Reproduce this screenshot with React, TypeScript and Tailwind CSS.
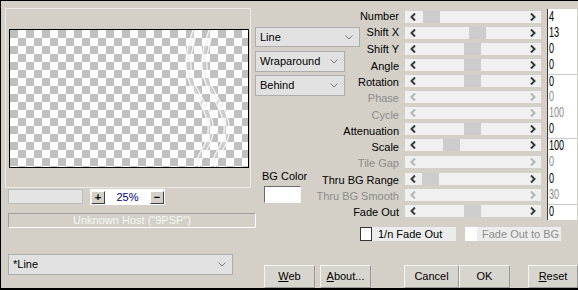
import React from 'react';

type Param = { label: string; value: string; thumb?: string; disabled?: boolean };

const params: Param[] = [
  { label: 'Number', value: '4', thumb: 'left-[18px]' },
  { label: 'Shift X', value: '13', thumb: 'left-[64px]' },
  { label: 'Shift Y', value: '0', thumb: 'left-[59px]' },
  { label: 'Angle', value: '0', thumb: 'left-[59px]' },
  { label: 'Rotation', value: '0', thumb: 'left-[59px]' },
  { label: 'Phase', value: '0', disabled: true },
  { label: 'Cycle', value: '100', disabled: true },
  { label: 'Attenuation', value: '0', thumb: 'left-[59px]' },
  { label: 'Scale', value: '100', thumb: 'left-[38px]' },
  { label: 'Tile Gap', value: '0', disabled: true },
  { label: 'Thru BG Range', value: '0', thumb: 'left-[17px]' },
  { label: 'Thru BG Smooth', value: '30', disabled: true },
  { label: 'Fade Out', value: '0', thumb: 'left-[59px]' },
];

const barRowH = ['h-[16px]', 'h-[16px]', 'h-[16px]', 'h-[16px]', 'h-[16px]', 'h-[16px]', 'h-[16px]', 'h-[16px]', 'h-[17px]', 'h-[17px]', 'h-[16px]', 'h-[16px]', 'h-[16px]'];
const labelRowH = ['h-[16px]', 'h-[17px]', 'h-[17px]', 'h-[16px]', 'h-[16px]', 'h-[17px]', 'h-[16px]', 'h-[16px]', 'h-[16px]', 'h-[17px]', 'h-[16px]', 'h-[16px]', 'h-[16px]'];

function Chevron() {
  return (
    <svg width="8" height="5" viewBox="0 0 8 5">
      <polyline points="0.5,0.5 4,4 7.5,0.5" fill="none" stroke="#7a7a7a" strokeWidth="1" />
    </svg>
  );
}

function Dropdown({ label, className }: { label: string; className: string }) {
  return (
    <div className={`flex items-center justify-between bg-[#e1e1e1] border border-[#adadad] pl-[4px] pr-[6px] text-black ${className}`}>
      <span>{label}</span>
      <Chevron />
    </div>
  );
}

function Arrow({ dir, disabled }: { dir: 'l' | 'r'; disabled?: boolean }) {
  const c = disabled ? '#b4b4b4' : '#3a3a3a';
  return (
    <svg width="6" height="8" viewBox="0 0 6 8">
      {dir === 'l' ? (
        <polyline points="5,0.5 1.5,4 5,7.5" fill="none" stroke={c} strokeWidth="2" />
      ) : (
        <polyline points="1,0.5 4.5,4 1,7.5" fill="none" stroke={c} strokeWidth="2" />
      )}
    </svg>
  );
}

function Button({ children, className }: { children: React.ReactNode; className: string }) {
  return (
    <div className={`h-[23px] flex items-center justify-center border border-t-[#f4f4f4] border-l-[#f4f4f4] border-r-[#9a9a9a] border-b-[#9a9a9a] bg-[#d8d5cf] text-black ${className}`}>
      {children}
    </div>
  );
}

const wave = 'M183 0 C174 25, 172 42, 185 64 C198 86, 204 102, 191 121 C187 128, 185 133, 184 137';

export default function App() {
  return (
    <div className="w-[578px] h-[290px] box-border border-t border-l border-b-2 border-black bg-[#d4d0c8] flex overflow-hidden font-['Liberation_Sans',Arial,sans-serif] text-[11px] leading-[13px] text-black">
      {/* Left column */}
      <div className="w-[254px] shrink-0 flex flex-col">
        <div className="mt-[7px] ml-[4px] w-[246px] h-[180px] box-border border border-[#ecebe8]">
          <div className="relative ml-[3px] mt-[20px] w-[240px] h-[139px] box-border border border-black bg-[conic-gradient(#fff_0_25%,#c0c0c0_0_50%,#fff_0_75%,#c0c0c0_0)] bg-[length:16px_16px]">
            <svg className="absolute inset-0" width="238" height="137" viewBox="0 0 238 137">
              <g fill="none" stroke="#e8e8e8" strokeWidth="3" opacity="0.35">
                <path d={wave} transform="translate(2,0)" />
                <path d={wave} transform="translate(18,0)" />
              </g>
              <g fill="none" stroke="#ffffff" strokeWidth="1.2" opacity="0.95">
                <path d={wave} />
                <path d={wave} transform="translate(5,0)" />
                <path d={wave} transform="translate(16,0)" />
                <path d={wave} transform="translate(21,0)" />
              </g>
            </svg>
          </div>
        </div>
        <div className="mt-[1px] flex items-start">
          <div className="ml-[7px] w-[75px] h-[15px] box-border border border-[#bdbdbd] bg-[#e4e4e4]" />
          <div className="ml-[7px] w-[75px] h-[16px] bg-white flex items-center justify-between px-[1px]">
            <div className="w-[14px] h-[13px] box-border border border-t-white border-l-white border-r-[#404040] border-b-[#404040] bg-[#d4d0c8] flex items-center justify-center font-bold text-[11px] leading-none">+</div>
            <span className="text-[#000080]">25%</span>
            <div className="w-[14px] h-[13px] box-border border border-t-white border-l-white border-r-[#404040] border-b-[#404040] bg-[#d4d0c8] flex items-center justify-center font-bold text-[11px] leading-none">−</div>
          </div>
        </div>
        <div className="mt-[8px] ml-[7px] w-[248px] h-[15px] shrink-0 box-border border border-t-[#a0a0a0] border-l-[#a0a0a0] border-r-white border-b-white flex items-center justify-center text-[#f6f6f6]">
          Unknown Host ("9PSP")
        </div>
        <Dropdown label="*Line" className="mt-[26px] ml-[7px] w-[225px] h-[21px] box-border" />
      </div>

      {/* Right part */}
      <div className="w-[323px] shrink-0 flex flex-col">
        <div className="h-[221px] flex">
          {/* middle column */}
          <div className="w-[105px] shrink-0 flex flex-col">
            <Dropdown label="Line" className="mt-[26px] w-[105px] h-[20px] box-border" />
            <Dropdown label="Wraparound" className="mt-[4px] w-[90px] h-[21px] box-border" />
            <Dropdown label="Behind" className="mt-[3px] w-[90px] h-[21px] box-border" />
            <div className="mt-[74px] ml-[7px] h-[13px]">BG Color</div>
            <div className="mt-[3px] ml-[9px] w-[37px] h-[17px] box-border border border-t-[#6a6a6a] border-l-[#6a6a6a] border-r-[#f4f4f4] border-b-[#f4f4f4] bg-white" />
          </div>
          {/* labels */}
          <div className="w-[39px] shrink-0 flex flex-col mt-[9px]">
            {params.map((p, i) => (
              <div key={p.label} className={`${labelRowH[i]} flex justify-end whitespace-nowrap ${p.disabled ? 'text-[#8c8c8c]' : 'text-black'}`}>
                {p.label}
              </div>
            ))}
          </div>
          {/* scrollbars */}
          <div className="ml-[6px] w-[136px] shrink-0 flex flex-col mt-[9px]">
            {params.map((p, i) => (
              <div key={p.label} className={`${barRowH[i]} pt-[1px] box-border`}>
                <div className="relative h-[12px] bg-[#f0f0f0] flex items-center justify-between px-[5px]">
                  {p.thumb && <div className={`absolute top-0 h-[12px] w-[17px] bg-[#cdcdcd] ${p.thumb}`} />}
                  <Arrow dir="l" disabled={p.disabled} />
                  <Arrow dir="r" disabled={p.disabled} />
                </div>
              </div>
            ))}
          </div>
          {/* edits */}
          <div className="ml-[6px] w-[30px] shrink-0 mt-[8px] self-start box-border border-l border-[#3c3c3c] bg-white pt-[1px]">
            {params.map((p, i) => (
              <div
                key={p.label}
                className={`${barRowH[i]} box-border pl-[1px] ${i === 4 || i === 8 || i === 12 ? 'border-t border-[#c8c8c8]' : ''} ${p.disabled ? 'text-[#8c8c8c]' : 'text-black'}`}
              >
                <span className="block w-[28px] origin-left scale-x-[0.65] text-[14px] leading-[12px] whitespace-nowrap">{p.value}</span>
              </div>
            ))}
          </div>
        </div>

        {/* checkbox row */}
        <div className="mt-[5px] pl-[105px] h-[14px] flex">
          <div className="w-[12px] h-[14px] box-border border border-[#333333] bg-white" />
          <div className="w-[84px] h-[14px] bg-[#ececec] pl-[6px] leading-[14px] whitespace-nowrap">1/n Fade Out</div>
          <div className="ml-[9px] w-[12px] h-[14px] bg-white" />
          <div className="w-[84px] h-[14px] bg-[#ececec] pl-[5px] leading-[14px] whitespace-nowrap text-[#8c8c8c]">Fade Out to BG</div>
        </div>

        {/* buttons */}
        <div className="mt-[24px] pl-[9px] flex">
          <Button className="w-[51px]"><span><span className="underline">W</span>eb</span></Button>
          <Button className="ml-[5px] w-[51px]"><span><span className="underline">A</span>bout...</span></Button>
          <Button className="ml-[33px] w-[55px]">Cancel</Button>
          <Button className="w-[51px]">OK</Button>
          <Button className="ml-[18px] w-[50px]"><span><span className="underline">R</span>eset</span></Button>
        </div>
      </div>
    </div>
  );
}
